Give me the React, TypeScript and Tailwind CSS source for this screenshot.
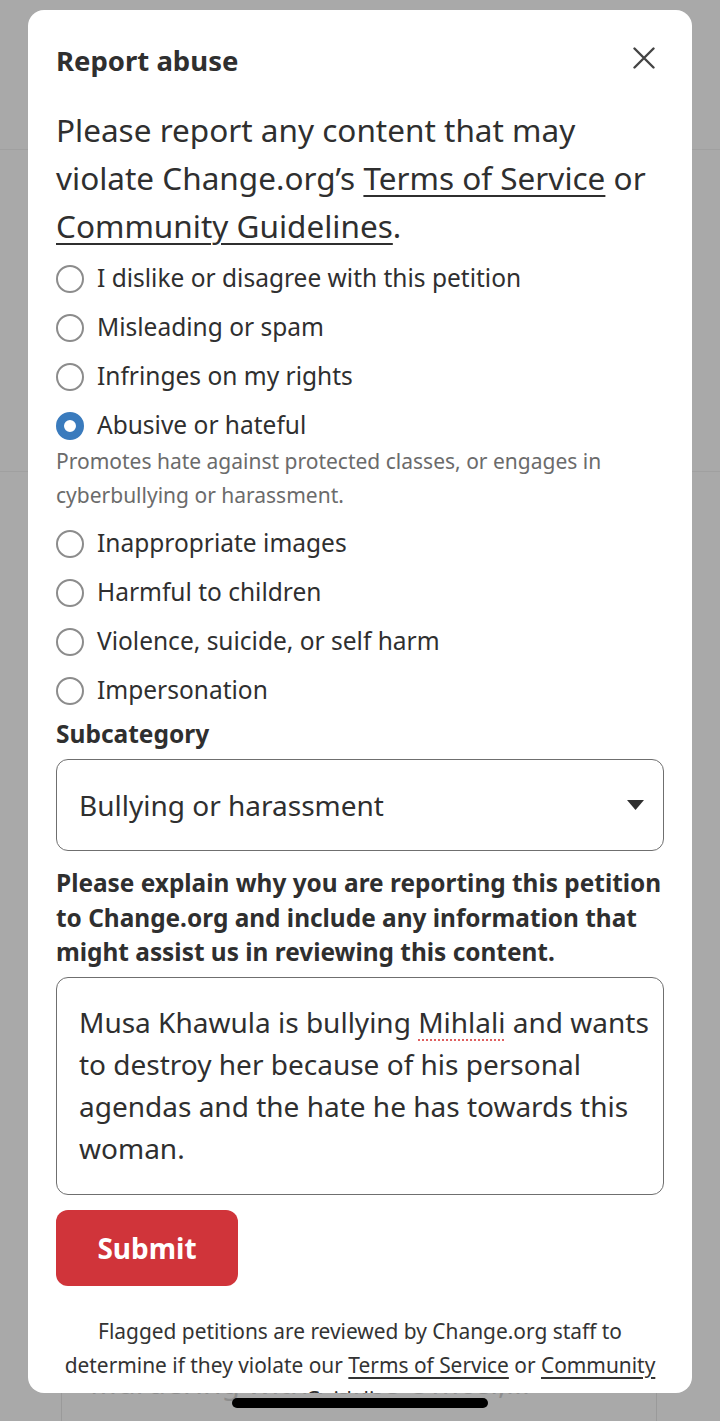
const reasons = [
	{ label: "I dislike or disagree with this petition" },
	{ label: "Misleading or spam" },
	{ label: "Infringes on my rights" },
	{
		label: "Abusive or hateful",
		checked: true,
		hint: "Promotes hate against protected classes, or engages in cyberbullying or harassment.",
	},
	{ label: "Inappropriate images" },
	{ label: "Harmful to children" },
	{ label: "Violence, suicide, or self harm" },
	{ label: "Impersonation" },
];

function Radio({ checked }: { checked?: boolean }) {
	if (checked) {
		return <span className="block h-[28px] w-[28px] shrink-0 rounded-full border-[8px] border-[#3a7bbd] bg-white" />;
	}
	return <span className="block h-[28px] w-[28px] shrink-0 rounded-full border-2 border-[#8c8c8c] bg-white" />;
}

function Backdrop() {
	return (
		<div className="flex h-full flex-col">
			<div className="h-[150px] border-b border-[#a0a0a0]" />
			<div className="h-[322px] border-b border-[#a0a0a0]" />
			<div className="flex-1" />
			<div className="ml-[61px] h-[60px] w-[596px] border-x border-[#9a9a9a] px-[28px]">
				<p className="text-[30px] leading-[44px] text-[#8d8d8d]">Murdering with Police Officer,...</p>
			</div>
		</div>
	);
}

export default function App() {
	return (
		<div className="relative h-[1421px] w-[720px] overflow-hidden bg-[#a9a9a9] font-['Noto_Sans',sans-serif] text-[#2f2f2f]">
			<Backdrop />

			<div className="absolute left-[28px] top-[10px] h-[1383px] w-[664px] overflow-hidden rounded-[16px] bg-white px-[28px] pt-[33px]">
				<div className="flex items-center justify-between">
					<h2 className="text-[27.5px] font-bold leading-[36px]">Report abuse</h2>
					<svg width="22" height="22" viewBox="0 0 22 22" className="-mt-[7px] mr-[9px] text-[#444]">
						<path d="M1.5 1.5l19 19M20.5 1.5l-19 19" stroke="currentColor" strokeWidth="2.4" strokeLinecap="round" />
					</svg>
				</div>

				<p className="mt-[27px] text-[31.5px] leading-[48px]">
					Please report any content that may violate Change.org’s{" "}
					<span className="underline decoration-[1.5px] underline-offset-[5px]">Terms of Service</span> or{" "}
					<span className="underline decoration-[1.5px] underline-offset-[5px]">Community Guidelines</span>.
				</p>

				<div className="mt-[4px] flex flex-col">
					{reasons.map((r) => (
						<div key={r.label}>
							<label className="flex h-[49px] items-center gap-[13px]">
								<Radio checked={r.checked} />
								<span className="text-[24.5px]">{r.label}</span>
							</label>
							{r.hint && (
								<p className="-mt-[6px] mb-[7px] text-[21px] leading-[34px] text-[#6b6b6b]">{r.hint}</p>
							)}
						</div>
					))}
				</div>

				<h3 className="mt-[2px] text-[24.5px] font-bold leading-[34px]">Subcategory</h3>
				<div className="mt-[8px] flex h-[92px] items-center justify-between rounded-[12px] border-[1.5px] border-[#6f6f6f] pl-[22px] pr-[19px]">
					<span className="text-[28px]">Bullying or harassment</span>
					<svg width="17" height="10" viewBox="0 0 17 10" className="text-[#2f2f2f]">
						<path d="M0 0h17L8.5 10z" fill="currentColor" />
					</svg>
				</div>

				<p className="mt-[15px] text-[24.4px] font-bold leading-[34.5px]">
					Please explain why you are reporting this petition to Change.org and include any information that might assist us in reviewing this content.
				</p>

				<div className="mt-[7px] h-[218px] rounded-[12px] border-[1.5px] border-[#6f6f6f] pl-[22px] pr-[12px] pt-[23px]">
					<p className="text-[28px] leading-[42px]">
						Musa Khawula is bullying{" "}
						<span className="underline decoration-[#e06060] decoration-dotted decoration-2 underline-offset-[7px]">Mihlali</span> and wants to destroy her because of his personal agendas and the hate he has towards this woman.
					</p>
				</div>

				<button className="mt-[15px] flex h-[76px] w-[182px] items-center justify-center rounded-[12px] bg-[#d0343a] text-[28px] font-bold text-white">
					Submit
				</button>

				<p className="-mx-[4px] mt-[28px] text-center text-[20.9px] leading-[34px] text-[#333]">
					Flagged petitions are reviewed by Change.org staff to determine if they violate our{" "}
					<span className="underline underline-offset-[4px]">Terms of Service</span> or{" "}
					<span className="underline underline-offset-[4px]">Community Guidelines</span>.
				</p>
			</div>

			<div className="absolute left-[232px] top-[1398px] h-[10px] w-[256px] rounded-full bg-black" />
		</div>
	);
}
